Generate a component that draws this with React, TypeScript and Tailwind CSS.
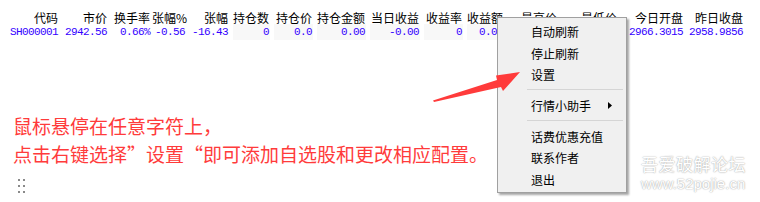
import React from "react";

const cols: { h: string; d: string; w: number; shade?: boolean }[] = [
  { h: "代码", d: "SH000001", w: 58 },
  { h: "市价", d: "2942.56", w: 49 },
  { h: "换手率", d: "0.66%", w: 43 },
  { h: "张幅%", d: "-0.56", w: 37 },
  { h: "张幅", d: "-16.43", w: 41 },
  { h: "持仓数", d: "0", w: 41, shade: true },
  { h: "持仓价", d: "0.0", w: 43, shade: true },
  { h: "持仓金额", d: "0.00", w: 53, shade: true },
  { h: "当日收益", d: "-0.00", w: 54, shade: true },
  { h: "收益率", d: "0", w: 43, shade: true },
  { h: "收益额", d: "0.00", w: 41, shade: true },
  { h: "最高价", d: "2966.30", w: 54, shade: true },
  { h: "最低价", d: "2940.12", w: 60, shade: true },
  { h: "今日开盘", d: "2966.3015", w: 66 },
  { h: "昨日收盘", d: "2958.9856", w: 60 },
];

const cjk = "font-['Noto_Sans_CJK_SC','Noto_Sans',sans-serif]";

function MenuItem({ label, arrow }: { label: string; arrow?: boolean }) {
  return (
    <div className="h-[21.5px] leading-[21.5px] pl-[33px] pr-[14px] flex items-center justify-between text-[12px] text-black">
      <span>{label}</span>
      {arrow && (
        <svg width="4" height="7" viewBox="0 0 4 7">
          <polygon points="0,0 4,3.5 0,7" fill="#000" />
        </svg>
      )}
    </div>
  );
}

export default function App() {
  return (
    <div lang="zh-CN" className={`relative w-[760px] h-[202px] overflow-hidden bg-white ${cjk}`}>
      {/* table */}
      <div className="flex pt-[11px] h-[24px] text-[12px] leading-[13px] text-black">
        {cols.map((c, i) => (
          <div key={i} className="text-right shrink-0 whitespace-nowrap" style={{ width: c.w }}>
            {c.h}
          </div>
        ))}
      </div>
      <div className="flex h-[16px] text-[11px] leading-[16px] tracking-[-0.6px] text-[#3300ff] font-['Liberation_Mono',monospace]">
        {cols.map((c, i) => (
          <div key={i} className="shrink-0 flex justify-end" style={{ width: c.w }}>
            <div
              className={`ml-[5px] flex-1 text-right whitespace-nowrap ${c.shade ? "bg-[#f8f8f8] -mr-[1px] pr-[1px]" : ""} ${i === 3 ? "pr-[2px]" : ""}`}
            >
              {c.d}
            </div>
          </div>
        ))}
      </div>

      {/* red instructions */}
      <div className="mt-[72px] pl-[13px] text-[19px] leading-[28px] text-[#ff3b3b] whitespace-nowrap">
        <div>鼠标悬停在任意字符上，</div>
        <div>点击右键选择”设置“即可添加自选股和更改相应配置。</div>
      </div>

      {/* grip dots */}
      <div className="mt-[11px] ml-[18px] grid grid-cols-2 w-[7px] gap-x-[3px] gap-y-[4px]">
        {[0, 1, 2, 3, 4, 5].map((k) => (
          <div key={k} className="w-[2px] h-[2px] bg-[#8a8a8a]" />
        ))}
      </div>

      {/* watermark */}
      <div className="absolute left-[641px] top-[153px] text-white [text-shadow:0_0_1px_#a8a8a8,0_0_2px_#c0c0c0]">
        <div className="text-[17px] leading-[22px] tracking-[0.5px]">吾爱破解论坛</div>
        <div className="text-[15px] leading-[18px] font-['Liberation_Sans',Arial,sans-serif]">www.52pojie.cn</div>
      </div>

      {/* context menu */}
      <div className="absolute left-[497px] top-[17px] w-[130px] h-[176px] bg-[#f0f0f0] border border-[#a0a0a0] shadow-[2px_2px_2px_rgba(0,0,0,0.35)] pt-[3px]">
        <MenuItem label="自动刷新" />
        <MenuItem label="停止刷新" />
        <MenuItem label="设置" />
        <div className="mt-[3.5px] mb-[5px] ml-[29px] mr-[3px] h-px bg-[#d5d5d5]" />
        <MenuItem label="行情小助手" arrow />
        <div className="mt-[3.5px] mb-[4.5px] ml-[29px] mr-[3px] h-px bg-[#d5d5d5]" />
        <MenuItem label="话费优惠充值" />
        <MenuItem label="联系作者" />
        <MenuItem label="退出" />
      </div>

      {/* red arrow */}
      <svg className="absolute left-0 top-0 pointer-events-none" width="760" height="202" viewBox="0 0 760 202">
        <polygon
          points="433,100.5 497,80 496,75.5 520,72 503,91 501,87 434,102"
          fill="#ff3b3b"
        />
      </svg>
    </div>
  );
}
